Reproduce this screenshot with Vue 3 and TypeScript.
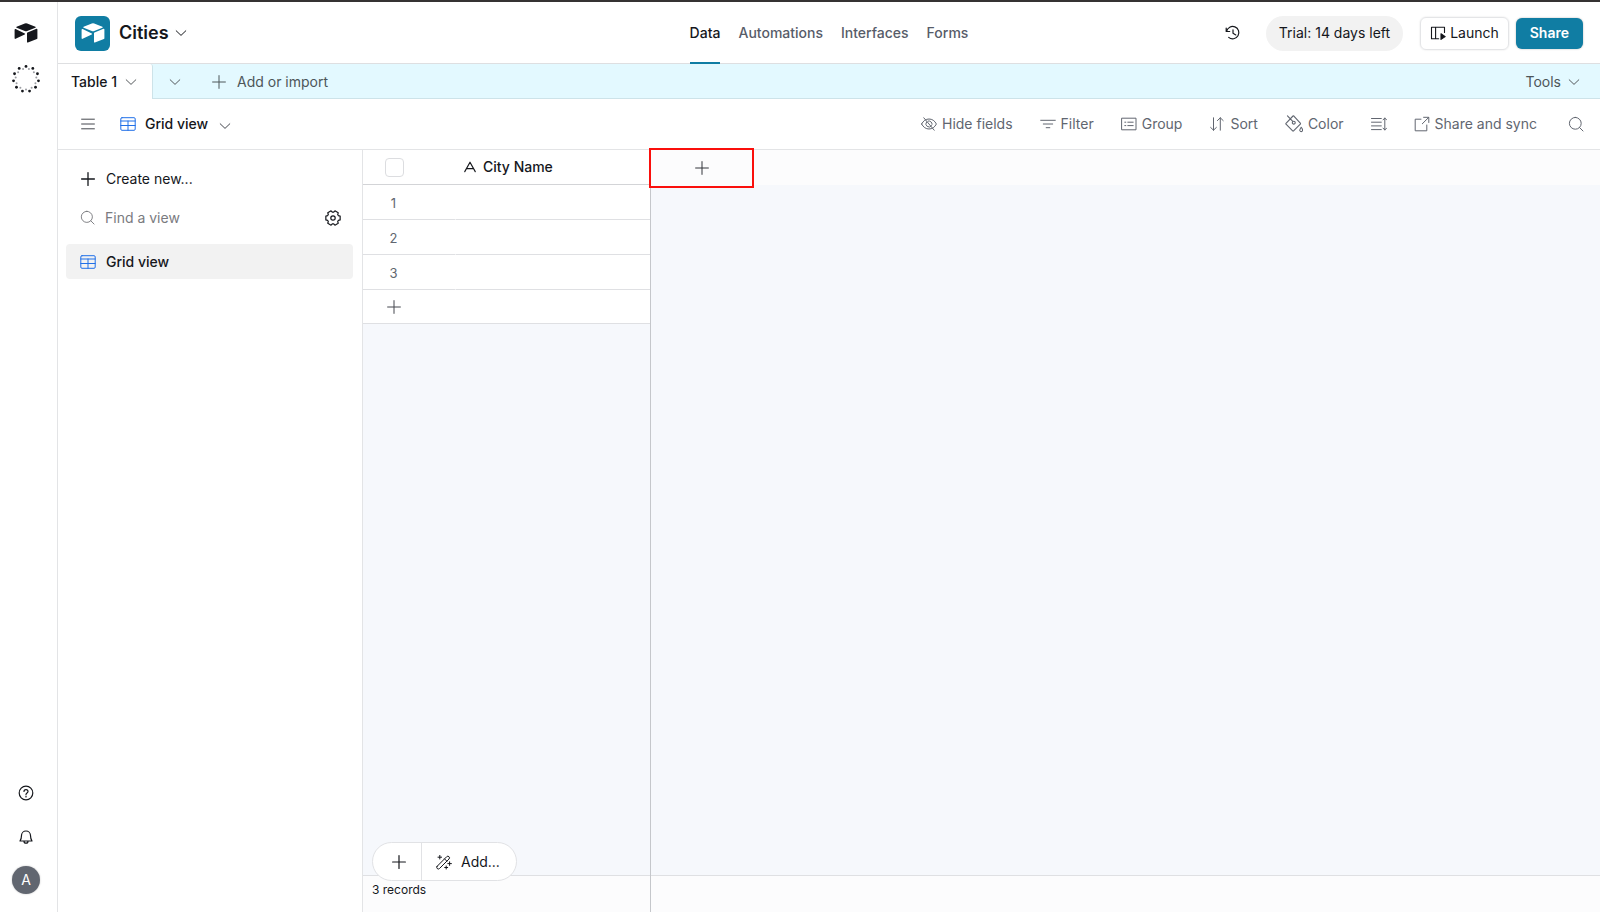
<script setup lang="ts">
import { h, ref } from 'vue'

const polar = (deg: number, r: number) => {
  const a = (deg * Math.PI) / 180
  return `${(8 + r * Math.cos(a)).toFixed(2)} ${(8 + r * Math.sin(a)).toFixed(2)}`
}
const gearOutline = Array.from({ length: 6 }, (_, i) => i * 60)
  .map((a) => `${polar(a - 15, 7.4)}L${polar(a + 15, 7.4)}L${polar(a + 23, 5.9)}L${polar(a + 37, 5.9)}`)
  .join('L')

const paths: Record<string, string> = {
  chevron: 'M3.2 5.8 8 10.4 12.8 5.8',
  plus: 'M8 1.6v12.8M1.6 8h12.8',
  menu: 'M1.6 3.2h12.8M1.6 8h12.8M1.6 12.8h12.8',
  table: 'M2 1.7h12a1.2 1.2 0 0 1 1.2 1.2v10.2a1.2 1.2 0 0 1-1.2 1.2H2A1.2 1.2 0 0 1 .8 13.1V2.9A1.2 1.2 0 0 1 2 1.7zM.8 5h14.4M.8 9.5h14.4M8 5v9.3',
  search: 'M7.3 1.4a5.9 5.9 0 1 0 0 11.8 5.9 5.9 0 0 0 0-11.8zM11.5 11.5 15 15',
  history: 'M1.2 3v3.5h3.5M1.6 6.3A6.2 6.2 0 1 1 3.7 12.4M8 4.8v3.5l2.8 1.6',
  launch: 'M14.5 7.5V2.2H1.5v11.6h7.2M5.6 2.2v11.6',
  hide: 'M2.8 1.8l10.4 12.4M.6 8C2.3 4.7 4.9 3 8 3s5.7 1.7 7.4 5c-1.7 3.3-4.3 5-7.4 5S2.3 11.3.6 8zM5.5 6a3.1 3.1 0 1 0 5.1 3.7M7.2 5a3.1 3.1 0 0 1 3.9 3.3',
  filter: 'M.7 4.3h14.6M3.3 8h9.4M6.2 11.7h3.6',
  group: 'M1 2.2h14v11.6H1zM3.8 6.2h1M6.8 6.2h5.4M3.8 9.6h1M6.8 9.6h5.4',
  sort: 'M4.5 1.8v12.4M1.6 11.4l2.9 2.8 2.9-2.8M11.3 14.2V1.8M8.4 4.6l2.9-2.8 2.9 2.8',
  color: 'M7.1.9.9 7.4a.6.6 0 0 0 0 .8l5.9 5.9c.2.200.6.200.8 0l6-6a.6.600 0 0 0 0-.8L7.900.9a.6.6 0 0 0-.8 0zM2.2.7l4.700 5M6.500 6.800a1.300 1.300 0 1 0 2.600 0a1.300 1.300 0 1 0-2.600 0M14.400 10.900c-1.200 1.700-1.500 2.200-1.200 3 .5 1.100 2 1.100 2.400 0 .3-.8 0-1.300-1.200-3z',
  height: 'M.5 2.5h9.8M.5 6.2h9.8M.5 9.9h9.8M.5 13.6h9.8M13.800 2v12M12 3.900l1.800-1.900 1.800 1.900M12 12.100l1.800 1.900 1.800-1.900',
  share: 'M7 3.2H1.2v11.6h11.6V9M9.6 1.3h5.2v5.2M14.6 1.5 8.3 7.8',
  gear: `M8 5.8a2.2 2.2 0 1 0 0 4.4 2.2 2.2 0 0 0 0-4.4zM${gearOutline}z`,
  help: 'M8 1.2a6.8 6.8 0 1 0 0 13.6A6.8 6.8 0 0 0 8 1.2zM6 6.5c0-2.7 4-2.5 4 0C10 8 8 7.9 8 9.4M8 11v1',
  bell: 'M3.5 6.5a4.5 4.5 0 0 1 9 0c0 2.7.6 4.1 1.5 5.500H2c.9-1.400 1.500-2.800 1.500-5.500zM6 12.200a2 2 0 0 0 4 0',
  text: 'M2 13.3 8 2.5l6 10.8M4.1 9.9h7.8',
  wand: 'M1.2 12.2 10.700 2.700a1.500 1.500 0 0 1 2.300 2.300l-9.500 9.500a1.500 1.500 0 0 1-2.300-2.300zM8.600 4.900l2.200 2.200M3.800 1.400v3.600M2 3.200h3.600M13.600 7.800v3.600M11.800 9.600h3.600M10.200 12v3M8.700 13.500h3',
}

const Icon = (props: { name: string; size?: number; weight?: number }) =>
  h('svg', {
    class: 'icon', viewBox: '0 0 16 16', width: props.size ?? 16, height: props.size ?? 16,
    fill: 'none', stroke: 'currentColor', 'stroke-width': props.weight ?? 1, 'stroke-linejoin': 'round',
    'stroke-linecap': 'round', 'aria-hidden': 'true',
  }, [
    h('path', { d: paths[props.name] }),
    props.name === 'launch' ? h('path', { d: 'M11 8.800v5.600l4.200-2.800z', fill: 'currentColor' }) : null,
  ])
Icon.props = ['name', 'size', 'weight']

const Mark = () =>
  h('svg', { class: 'mark', viewBox: '0 0 24 20', width: 24, height: 20, fill: 'currentColor', 'aria-hidden': 'true' }, [
    h('path', { d: 'M10.8.4 2.6 3.7c-.5.2-.5.8 0 1l8.200 3.300c.8.300 1.600.300 2.400 0l8.200-3.300c.5-.2.5-.8 0-1L13.200.4a3.300 3.300 0 0 0-2.400 0z' }),
    h('path', { d: 'M13 10v8.9c0 .5.5.8.9.6l9-3.6c.3-.1.5-.3.5-.6V6.4c0-.5-.5-.8-.9-.6l-9 3.6c-.3.1-.5.3-.5.6z' }),
    h('path', { d: 'M10.8 10.4 1.6 6.1C1.1 5.9.6 6.2.6 6.7v8.5c0 .6.6.8 1 .6l9.1-4.4c.5-.2.5-.8.1-1z' }),
  ])

const dots = Array.from({ length: 11 }, (_, i) => {
  const a = (i / 11) * Math.PI * 2 - Math.PI / 2
  const b = a + Math.PI / 11
  return {
    x: 14 + 12.6 * Math.cos(a), y: 14 + 12.6 * Math.sin(a),
    ix: 14 + 10.4 * Math.cos(b), iy: 14 + 10.4 * Math.sin(b),
  }
})

const sections = ['Data', 'Automations', 'Interfaces', 'Forms']
const tools = [
  { icon: 'hide', label: 'Hide fields' },
  { icon: 'filter', label: 'Filter' },
  { icon: 'group', label: 'Group' },
  { icon: 'sort', label: 'Sort' },
  { icon: 'color', label: 'Color' },
  { icon: 'height', label: '' },
  { icon: 'share', label: 'Share and sync' },
]
const records = ref<number[]>([1, 2, 3])
const query = ref('')
const allChecked = ref(false)
</script>

<template>
  <div class="app">
    <aside class="rail">
      <a href="#" class="home" aria-label="Home"><Mark /></a>
      <svg class="dots" viewBox="0 0 28 28" width="28" height="28" aria-hidden="true">
        <template v-for="(d, i) in dots" :key="i">
          <circle :cx="d.x" :cy="d.y" r="1.4" fill="#15171c" />
          <circle :cx="d.ix" :cy="d.iy" r="1" fill="#9b9da2" />
        </template>
      </svg>
      <div class="rail-bottom">
        <button aria-label="Help"><Icon name="help" :weight="1.2" /></button>
        <button aria-label="Notifications"><Icon name="bell" :weight="1.2" /></button>
        <button class="avatar" aria-label="Account">A</button>
      </div>
    </aside>

    <div class="main">
      <header class="header">
        <div class="base">
          <span class="base-icon"><Mark /></span>
          <button class="base-name">Cities <Icon name="chevron" /></button>
        </div>
        <nav class="sections">
          <a v-for="s in sections" :key="s" href="#" :class="{ active: s === 'Data' }">{{ s }}</a>
        </nav>
        <div class="actions">
          <button class="history" aria-label="History"><Icon name="history" :weight="1.2" /></button>
          <button class="trial">Trial: 14 days left</button>
          <button class="launch"><Icon name="launch" :weight="1.1" />Launch</button>
          <button class="share">Share</button>
        </div>
      </header>

      <div class="tabs">
        <button class="tab">Table 1 <Icon name="chevron" /></button>
        <button class="tab-more" aria-label="All tables"><Icon name="chevron" /></button>
        <button class="tab-add"><Icon name="plus" />Add or import</button>
        <button class="tab-tools">Tools <Icon name="chevron" /></button>
      </div>

      <div class="toolbar">
        <button class="menu-btn" aria-label="Toggle sidebar"><Icon name="menu" /></button>
        <button class="view-btn"><Icon name="table" class="blue" />Grid view<Icon name="chevron" class="view-chevron" /></button>
        <div class="tools">
          <button v-for="t in tools" :key="t.icon" :aria-label="t.label || 'Row height'">
            <Icon :name="t.icon" :size="t.icon === 'color' ? 18 : 16" />
            <span v-if="t.label">{{ t.label }}</span>
          </button>
          <button class="find" aria-label="Search"><Icon name="search" /></button>
        </div>
      </div>

      <div class="content">
        <aside class="sidebar">
          <button class="side-row create"><Icon name="plus" :weight="1.3" />Create new...</button>
          <div class="side-row">
            <Icon name="search" :size="15" class="muted" />
            <input v-model="query" type="text" placeholder="Find a view" aria-label="Find a view" />
            <button aria-label="View settings"><Icon name="gear" :weight="1.2" /></button>
          </div>
          <a href="#" class="side-row selected"><Icon name="table" class="blue" />Grid view</a>
        </aside>

        <div class="grid">
          <section class="left-pane">
            <table>
              <thead>
                <tr>
                  <th class="num"><input v-model="allChecked" type="checkbox" aria-label="Select all records" /></th>
                  <th><span class="field"><Icon name="text" :size="14" :weight="1.3" />City Name</span></th>
                </tr>
              </thead>
              <tbody>
                <tr v-for="r in records" :key="r"><td class="num">{{ r }}</td><td></td></tr>
              </tbody>
            </table>
            <button class="add-row" aria-label="Add record"><Icon name="plus" /></button>
            <div class="filler">
              <div class="float-add">
                <button aria-label="Add record"><Icon name="plus" :weight="1.2" /></button>
                <button><Icon name="wand" />Add...</button>
              </div>
            </div>
            <footer class="foot">3 records</footer>
          </section>
          <section class="right-pane">
            <div class="right-head">
              <button class="add-field" aria-label="Add field"><Icon name="plus" /></button>
            </div>
            <div class="filler"></div>
            <footer class="foot"></footer>
          </section>
        </div>
      </div>
    </div>
  </div>
</template>

<style>
body { margin: 0; background: #fff; }
</style>

<style scoped>
.app, .app * { box-sizing: border-box; }
.app {
  display: flex;
  min-height: 100vh;
  border-top: 2px solid #353233;
  font-family: Inter, "Liberation Sans", sans-serif;
  font-size: 14px;
  line-height: 20px;
  color: #15171c;
}
button, input { font: inherit; color: inherit; }
button { display: flex; align-items: center; padding: 0; border: 0; background: none; white-space: nowrap; }
a { color: inherit; text-decoration: none; }
.icon, .mark { flex: none; display: block; }
.blue { color: #2170e8; }

.rail {
  width: 58px;
  flex: none;
  display: flex;
  flex-direction: column;
  align-items: center;
  padding: 21px 5px 18px 0;
  border-right: 1px solid #e3e4e6;
}
.dots { margin-top: 22px; }
.rail-bottom { margin-top: auto; display: flex; flex-direction: column; align-items: center; gap: 28px; }
.avatar {
  width: 28px;
  height: 28px;
  margin-top: -7px;
  justify-content: center;
  border-radius: 50%;
  background: #616670;
  color: #fff;
  box-shadow: 0 0 2px rgba(0, 0, 0, .25);
}

.main { flex: 1; min-width: 0; display: flex; flex-direction: column; }

.header {
  display: grid;
  grid-template-columns: 1fr auto 1fr;
  height: 62px;
  padding: 0 17px;
  border-bottom: 1px solid #dedfe1;
}
.base { display: flex; align-items: center; gap: 9px; }
.base-icon {
  width: 35px;
  height: 35px;
  display: flex;
  align-items: center;
  justify-content: center;
  border-radius: 6px;
  background: #107da3;
  color: #fff;
}
.base-name { gap: 4px; font-size: 18px; font-weight: 600; }
.sections { display: flex; gap: 18px; font-weight: 500; color: #575c69; }
.sections a { display: flex; align-items: center; height: 62px; border-bottom: 2px solid transparent; border-top: 2px solid transparent; }
.sections .active { color: #15171c; border-bottom-color: #107da3; }
.actions { display: flex; align-items: center; justify-content: flex-end; }
.history { margin-right: 25px; }
.trial { height: 35px; padding: 0 13px; margin-right: 17px; border-radius: 18px; background: #f2f2f2; }
.launch {
  height: 33px;
  gap: 4px;
  padding: 0 9px;
  margin-right: 7px;
  border: 1px solid #e4e5e7;
  border-radius: 6px;
  box-shadow: 0 0 2px rgba(0, 0, 0, .12);
}
.share { height: 31px; padding: 0 14px; border-radius: 6px; background: #107da3; color: #fff; font-weight: 600; box-shadow: 0 0 2px rgba(0, 0, 0, .3); }

.tabs { display: flex; height: 35px; background: #e3f9ff; color: #4d5659; border-bottom: 1px solid #cde3e9; }
.tabs button { height: 36px; }
.tabs .tab {
  width: 95px;
  height: 35px;
  padding-left: 13px;
  gap: 6px;
  background: #fff;
  color: #15171c;
  font-weight: 500;
  border-right: 1px solid #cde3e9;
  border-radius: 0 3px 0 0;
}
.tab .icon, .tab-more, .tab-tools .icon { color: #55595c; }
.tab-more { margin-left: 14px; }
.tab-add { margin-left: 28px; gap: 10px; }
.tab-tools { margin-left: auto; padding-right: 18px; gap: 5px; }

.toolbar { display: flex; align-items: center; height: 51px; padding: 0 16px 0 22px; border-bottom: 1px solid #e3e4e6; }
.view-btn { margin-left: 24px; gap: 9px; font-weight: 500; }
.menu-btn, .view-chevron { color: #44474e; }
.view-chevron { margin-top: 3px; }
.tools { margin-left: auto; display: flex; align-items: center; gap: 27px; color: #616670; }
.tools button { gap: 5px; }
.tools .find { margin-left: 4px; }

.content { flex: 1; display: flex; }
.sidebar { width: 305px; flex: none; padding: 11px 9px 11px 8px; border-right: 1px solid #e3e4e6; }
.side-row { width: 100%; height: 35px; display: flex; align-items: center; gap: 10px; padding: 0 12px 0 14px; border-radius: 4px; }
.create { margin-bottom: 4px; }
.side-row input { flex: 1; min-width: 0; padding: 0; border: 0; outline: 0; background: none; }
.side-row input::placeholder { color: #7a7b7f; opacity: 1; }
.muted { color: #7a7b7f; }
.selected { margin-top: 9px; background: #f2f2f2; font-weight: 500; }

.grid { flex: 1; display: flex; min-width: 0; }
.left-pane { width: 288px; flex: none; display: flex; flex-direction: column; border-right: 1px solid #c5c7cb; }
.right-pane { flex: 1; display: flex; flex-direction: column; }
table { width: 100%; border-spacing: 0; table-layout: fixed; }
th { height: 35px; padding: 0; font-weight: 500; text-align: left; border-bottom: 1px solid #d3d4d7; }
td { height: 35px; padding: 0; border-bottom: 1px solid #dfe0e3; }
.num { width: 93px; padding: 0 31px 0 0; text-align: center; font-size: 13px; color: #616670; }
td.num { padding-top: 2px; border-right: 1px solid #fff; }
th input {
  appearance: none;
  display: block;
  width: 19px;
  height: 19px;
  margin: 0 auto;
  border: 1px solid #dcdde0;
  border-radius: 4px;
  background: #fff;
}
.field { display: flex; align-items: center; gap: 6px; padding-left: 7px; }
.add-row { height: 34px; padding-left: 23px; border-bottom: 1px solid #dfe0e3; color: #44474e; }
.filler { flex: 1; position: relative; background: #f6f8fc; }
.foot { height: 37px; padding: 4px 9px; background: #fcfcfd; border-top: 1px solid #dfe0e3; font-size: 12px; }
.float-add {
  position: absolute;
  left: 9px;
  bottom: -6px;
  display: flex;
  height: 39px;
  border: 1px solid #e1e2e5;
  border-radius: 20px;
  background: #fff;
}
.float-add button { padding: 0 16px 0 14px; gap: 9px; }
.float-add button:first-child { padding: 0 14px 0 18px; border-right: 1px solid #e1e2e5; }
.right-head { height: 35px; background: #fcfcfd; }
.add-field {
  position: relative;
  z-index: 1;
  width: 101px;
  height: 36px;
  justify-content: center;
  color: #33353b;
  background: #fcfcfd;
  outline: 2px solid #fa0f0c;
}
</style>
